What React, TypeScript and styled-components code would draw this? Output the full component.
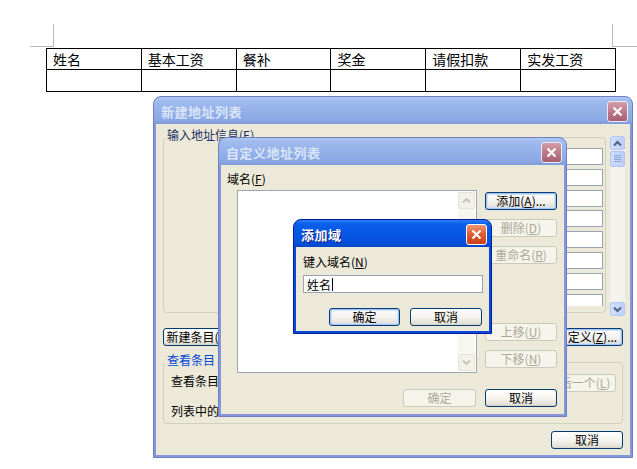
import styled, { createGlobalStyle, css } from "styled-components";

const FONT = `"Noto Sans CJK SC", "Noto Sans", sans-serif`;

const GlobalStyle = createGlobalStyle`
  html, body { margin: 0; padding: 0; background: #fff; }
  body { font-family: ${FONT}; font-size: 12px; color: #000; }
  * { box-sizing: border-box; }
`;

const Screen = styled.div`
  position: relative;
  width: 637px;
  height: 469px;
  overflow: hidden;
  background: #fff;
`;

/* ---------- word document behind the dialogs ---------- */

const Page = styled.div`
  position: relative;
  padding: 48px 0 0 46px;
`;

const CropMark = styled.span<{ $side: "left" | "right" }>`
  position: absolute;
  top: 24px;
  height: 23px;
  border-bottom: 1px solid #b9b9b9;
  ${(p) =>
    p.$side === "left"
      ? css`
          left: 30px;
          width: 24px;
          border-right: 1px solid #b9b9b9;
        `
      : css`
          left: 612px;
          width: 25px;
          border-left: 1px solid #b9b9b9;
        `}
`;

const DocTable = styled.table`
  width: 570px;
  border-collapse: collapse;
  table-layout: fixed;
  font-size: 14px;
`;

const DocRow = styled.tr<{ $h: number }>`
  height: ${(p) => p.$h}px;
`;

const Cell = styled.td`
  padding: 0 0 0 6px;
  border: 1px solid #000;
  line-height: 1;
  white-space: nowrap;
`;

/* ---------- XP style windows ---------- */

const Window = styled.section<{
  $x: number;
  $y: number;
  $w: number;
  $h: number;
  $active?: boolean;
}>`
  position: absolute;
  left: ${(p) => p.$x}px;
  top: ${(p) => p.$y}px;
  width: ${(p) => p.$w}px;
  height: ${(p) => p.$h}px;
  display: flex;
  flex-direction: column;
  border-radius: 8px 8px 0 0;
  overflow: hidden;
  border: 1px solid ${(p) => (p.$active ? "#001c9c" : "#6f7fc2")};
  background: ${(p) => (p.$active ? "#0a48d8" : "#8597da")};
`;

const TitleBar = styled.header<{ $active?: boolean }>`
  flex: none;
  height: 27px;
  display: flex;
  align-items: center;
  justify-content: space-between;
  padding: 1px 4px 0 7px;
  background: ${(p) =>
    p.$active
      ? "linear-gradient(#2d80f8 0%, #0a60ea 14%, #0658e6 45%, #0551dd 80%, #0347c9 100%)"
      : "linear-gradient(#aec6f3 0%, #9fbaee 15%, #94b1e9 50%, #8aa8e4 85%, #809bdb 100%)"};
`;

const TitleText = styled.h1<{ $active?: boolean }>`
  margin: 0;
  font-size: 13px;
  font-weight: 700;
  letter-spacing: 0.5px;
  color: ${(p) => (p.$active ? "#fff" : "#dae4f8")};
  text-shadow: ${(p) => (p.$active ? "1px 1px 0 #0a1883" : "none")};
`;

const CloseButton = styled.span<{ $active?: boolean }>`
  width: 21px;
  height: 21px;
  display: flex;
  align-items: center;
  justify-content: center;
  border-radius: 3px;
  border: 1px solid ${(p) => (p.$active ? "#fff" : "#e6eaf7")};
  background: ${(p) =>
    p.$active
      ? "linear-gradient(#f29672, #e05a30 50%, #c93f1a)"
      : "linear-gradient(#d59dab, #bd7a8a 50%, #a65e70)"};
`;

const WinBody = styled.div`
  flex: 1;
  margin: 0 2px 2px;
  display: flex;
  flex-direction: column;
  background: #ece9d8;
`;

const OuterBody = styled(WinBody)`
  padding: 4px 7px 0 7px;
`;

const InnerBody = styled(WinBody)`
  padding: 7px 7px 0 6px;
`;

const TopBody = styled(WinBody)`
  padding: 8px 7px 0 7px;
`;

/* ---------- controls ---------- */

const Btn = styled.button<{ $w: number; $default?: boolean }>`
  flex: none;
  width: ${(p) => p.$w}px;
  height: 18px;
  padding: 0;
  font-family: ${FONT};
  font-size: 12px;
  line-height: 16px;
  white-space: nowrap;
  overflow: hidden;
  color: #000;
  border: 1px solid #003c74;
  border-radius: 3px;
  background: linear-gradient(#ffffff, #f3f2ec 55%, #e3e0d5 90%, #d6d0c5);
  ${(p) =>
    p.$default &&
    css`
      box-shadow: inset 0 0 0 1px #a9c4f0, inset 0 0 0 2px #cfe0fb;
    `}
  &:disabled {
    color: #aca899;
    border-color: #cbc8bc;
    background: #f5f4ea;
    box-shadow: none;
  }
`;

const GroupBox = styled.fieldset<{ $w: number; $h: number }>`
  flex: none;
  width: ${(p) => p.$w}px;
  height: ${(p) => p.$h}px;
  min-width: 0;
  margin: 0;
  padding: 2px 2px 0 7px;
  border: 1px solid #d0d0bf;
  border-radius: 4px;
`;

const Legend = styled.legend<{ $blue?: boolean }>`
  margin-left: -6px;
  padding: 0 2px 4px;
  font-size: 12px;
  line-height: 14px;
  color: ${(p) => (p.$blue ? "#0046d5" : "#1b2f66")};
`;

const Label = styled.div`
  font-size: 12px;
  line-height: 14px;
  white-space: nowrap;
`;

const FieldList = styled.div`
  height: 158px;
  overflow: hidden;
  display: grid;
  grid-auto-rows: 17px;
  row-gap: 3.8px;
  justify-items: end;
`;

const TextBox = styled.div<{ $w: number; $h: number }>`
  flex: none;
  width: ${(p) => p.$w}px;
  height: ${(p) => p.$h}px;
  display: flex;
  align-items: center;
  padding-left: 3px;
  border: 1px solid #98a4b4;
  background: #fff;
  font-size: 12px;
`;

const Caret = styled.span`
  display: inline-block;
  width: 1px;
  height: 13px;
  margin-left: 1px;
  background: #000;
`;

const VScroll = styled.div<{ $h: number; $disabled?: boolean }>`
  flex: none;
  width: ${(p) => (p.$disabled ? 17 : 15)}px;
  height: ${(p) => p.$h}px;
  display: flex;
  flex-direction: column;
  justify-content: space-between;
  gap: 1px;
  background: ${(p) => (p.$disabled ? "#f7f6f1" : "#f3f2ec")};
`;

const ScrollArrow = styled.div<{ $disabled?: boolean }>`
  flex: none;
  height: ${(p) => (p.$disabled ? 17 : 14)}px;
  display: flex;
  align-items: center;
  justify-content: center;
  border-radius: 2px;
  border: 1px solid ${(p) => (p.$disabled ? "#e6e4d9" : "#b4c8f4")};
  background: ${(p) =>
    p.$disabled ? "#f3f1ea" : "linear-gradient(to right, #d4e0fc, #bccffa)"};
`;

const ScrollThumb = styled.div`
  flex: none;
  height: 16px;
  display: flex;
  align-items: center;
  justify-content: center;
  border-radius: 2px;
  border: 1px solid #b0c4f3;
  background: linear-gradient(to right, #d0ddfc, #bacdf9);
`;

const ScrollTrack = styled.div`
  flex: 1;
`;

/* ---------- layout rows ---------- */

const TopRow = styled.div`
  display: flex;
  align-items: flex-start;
  gap: 4px;
`;

const OuterScroll = styled.div`
  margin-top: 8px;
`;

const SpreadRow = styled.div<{ $mt: number }>`
  display: flex;
  justify-content: space-between;
  align-items: center;
  margin-top: ${(p) => p.$mt}px;
`;

const EndRow = styled.div<{ $mt: number; $gap?: number }>`
  display: flex;
  justify-content: flex-end;
  gap: ${(p) => p.$gap ?? 9}px;
  margin-top: ${(p) => p.$mt}px;
`;

const GroupLine = styled.div<{ $mt: number }>`
  display: flex;
  align-items: flex-start;
  justify-content: space-between;
  min-height: 14px;
  margin-top: ${(p) => p.$mt}px;
  padding-right: 4px;
`;

const OuterGroup2 = styled.div`
  margin-top: 7px;
`;

const ListArea = styled.div`
  display: flex;
  margin-top: 4px;
`;

const ListBox = styled.div`
  flex: none;
  width: 240px;
  height: 183px;
  margin-left: 10px;
  padding: 1px;
  display: flex;
  justify-content: flex-end;
  border: 1px solid #9ea6b3;
  background: #fff;
`;

const ButtonColumn = styled.div`
  height: 176px;
  margin: 2px 0 0 8px;
  display: flex;
  flex-direction: column;
  justify-content: space-between;
`;

const ButtonStack = styled.div`
  display: flex;
  flex-direction: column;
  gap: 9px;
`;

const InputSpacer = styled.div`
  margin-top: 6px;
`;

/* ---------- glyphs ---------- */

function Chevron({ dir, color }: { dir: "up" | "down"; color: string }) {
  return (
    <svg width="9" height="7" viewBox="0 0 9 7">
      <polyline
        points={dir === "up" ? "1,5.5 4.5,2 8,5.5" : "1,1.5 4.5,5 8,1.5"}
        fill="none"
        stroke={color}
        strokeWidth="2"
      />
    </svg>
  );
}

function Grip() {
  return (
    <svg width="7" height="8" viewBox="0 0 7 8">
      {[0.5, 2.5, 4.5, 6.5].map((y) => (
        <line key={y} x1="0" y1={y} x2="7" y2={y} stroke="#8fa6dc" strokeWidth="1" />
      ))}
    </svg>
  );
}

function CloseGlyph() {
  return (
    <svg width="11" height="11" viewBox="0 0 11 11">
      <path d="M1.5 1.5 L9.5 9.5 M9.5 1.5 L1.5 9.5" stroke="#fff" strokeWidth="2.2" />
    </svg>
  );
}

function Title({ text, active }: { text: string; active?: boolean }) {
  return (
    <TitleBar $active={active}>
      <TitleText $active={active}>{text}</TitleText>
      <CloseButton $active={active}>
        <CloseGlyph />
      </CloseButton>
    </TitleBar>
  );
}

const headers = ["姓名", "基本工资", "餐补", "奖金", "请假扣款", "实发工资"];
const fieldNames = ["职务", "名字", "姓氏", "公司名称", "地址行 1", "地址行 2", "城市", "省/市/自治区"];

export default function App() {
  return (
    <Screen>
      <GlobalStyle />

      <Page>
        <CropMark $side="left" />
        <CropMark $side="right" />
        <DocTable>
          <tbody>
            <DocRow $h={21}>
              {headers.map((h) => (
                <Cell key={h}>{h}</Cell>
              ))}
            </DocRow>
            <DocRow $h={22}>
              {headers.map((h) => (
                <Cell key={h} />
              ))}
            </DocRow>
          </tbody>
        </DocTable>
      </Page>

      {/* 新建地址列表 */}
      <Window $x={153} $y={96} $w={480} $h={362}>
        <Title text="新建地址列表" />
        <OuterBody>
          <TopRow>
            <GroupBox $w={443} $h={185}>
              <Legend>
                输入地址信息(<u>E</u>)
              </Legend>
              <FieldList>
                {fieldNames.map((f) => (
                  <TextBox key={f} $w={180} $h={17} />
                ))}
              </FieldList>
            </GroupBox>
            <OuterScroll>
              <VScroll $h={180}>
                <ScrollArrow>
                  <Chevron dir="up" color="#4d6185" />
                </ScrollArrow>
                <ScrollThumb>
                  <Grip />
                </ScrollThumb>
                <ScrollTrack />
                <ScrollArrow>
                  <Chevron dir="down" color="#4d6185" />
                </ScrollArrow>
              </VScroll>
            </OuterScroll>
          </TopRow>

          <SpreadRow $mt={12}>
            <Btn $w={72}>
              新建条目(<u>N</u>)
            </Btn>
            <Btn $w={73} $default>
              自定义(<u>Z</u>)...
            </Btn>
          </SpreadRow>

          <OuterGroup2>
            <GroupBox $w={460} $h={71}>
              <Legend $blue>查看条目</Legend>
              <GroupLine $mt={1}>
                <Label>查看条目编号(V)</Label>
                <Btn $w={62} disabled>
                  后一个(<u>L</u>)
                </Btn>
              </GroupLine>
              <GroupLine $mt={12}>
                <Label>列表中的条目总数: 0</Label>
              </GroupLine>
            </GroupBox>
          </OuterGroup2>

          <EndRow $mt={7}>
            <Btn $w={72}>取消</Btn>
          </EndRow>
        </OuterBody>
      </Window>

      {/* 自定义地址列表 */}
      <Window $x={218} $y={137} $w={349} $h={280}>
        <Title text="自定义地址列表" />
        <InnerBody>
          <Label>
            域名(<u>F</u>)
          </Label>
          <ListArea>
            <ListBox>
              <VScroll $h={179} $disabled>
                <ScrollArrow $disabled>
                  <Chevron dir="up" color="#c9c6b8" />
                </ScrollArrow>
                <ScrollArrow $disabled>
                  <Chevron dir="down" color="#c9c6b8" />
                </ScrollArrow>
              </VScroll>
            </ListBox>
            <ButtonColumn>
              <ButtonStack>
                <Btn $w={72} $default>
                  添加(<u>A</u>)...
                </Btn>
                <Btn $w={72} disabled>
                  删除(<u>D</u>)
                </Btn>
                <Btn $w={72} disabled>
                  重命名(<u>R</u>)
                </Btn>
              </ButtonStack>
              <ButtonStack>
                <Btn $w={72} disabled>
                  上移(<u>U</u>)
                </Btn>
                <Btn $w={72} disabled>
                  下移(<u>N</u>)
                </Btn>
              </ButtonStack>
            </ButtonColumn>
          </ListArea>
          <EndRow $mt={16}>
            <Btn $w={73} disabled>
              确定
            </Btn>
            <Btn $w={72}>取消</Btn>
          </EndRow>
        </InnerBody>
      </Window>

      {/* 添加域 */}
      <Window $x={293} $y={219} $w={199} $h={115} $active>
        <Title text="添加域" active />
        <TopBody>
          <Label>
            键入域名(<u>N</u>)
          </Label>
          <InputSpacer>
            <TextBox $w={180} $h={18}>
              姓名
              <Caret />
            </TextBox>
          </InputSpacer>
          <EndRow $mt={15} $gap={10}>
            <Btn $w={71} $default>
              确定
            </Btn>
            <Btn $w={72}>取消</Btn>
          </EndRow>
        </TopBody>
      </Window>
    </Screen>
  );
}
